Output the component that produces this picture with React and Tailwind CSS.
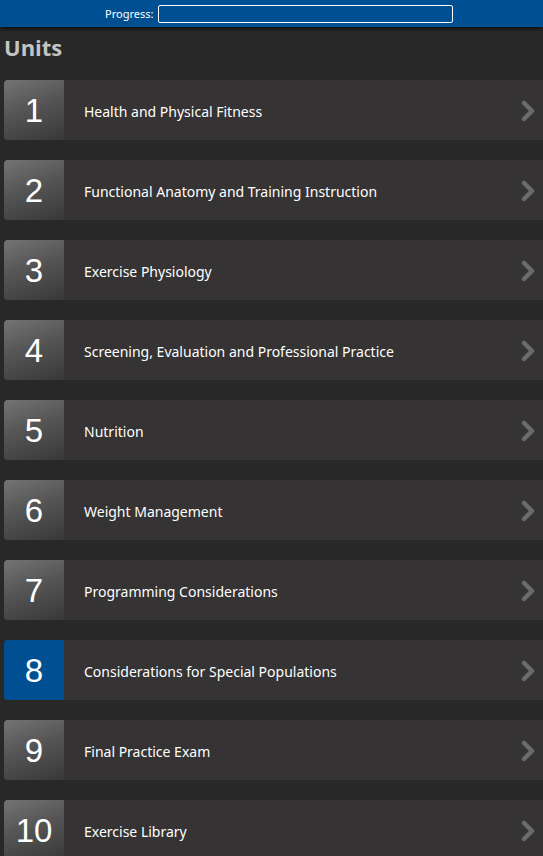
import React from "react";

const units = [
  "Health and Physical Fitness",
  "Functional Anatomy and Training Instruction",
  "Exercise Physiology",
  "Screening, Evaluation and Professional Practice",
  "Nutrition",
  "Weight Management",
  "Programming Considerations",
  "Considerations for Special Populations",
  "Final Practice Exam",
  "Exercise Library",
];

function Chevron() {
  return (
    <svg width="16" height="22" viewBox="0 0 16 22" fill="none">
      <path d="M4 3 L12 11 L4 19" stroke="#6b6b6b" strokeWidth="4.5" strokeLinecap="round" strokeLinejoin="round" />
    </svg>
  );
}

export default function App() {
  return (
    <div className="min-h-[856px] bg-[#282828] overflow-hidden" style={{ fontFamily: '"Noto Sans", "Open Sans", sans-serif' }}>
      <div className="h-[27px] bg-[#004f93] flex items-center shadow-[0_2px_4px_rgba(0,0,0,0.6)] relative z-10">
        <span className="ml-[105px] text-[11px] text-white leading-none">Progress:</span>
        <div className="ml-[5px] w-[295px] h-[18px] border border-white rounded-[2px]"></div>
      </div>
      <h1 className="pl-[4px] pt-[5px] h-[53px] text-[22px] font-bold text-[#c4c4c4] leading-[30px]" style={{ fontFamily: '"Open Sans", "Noto Sans", sans-serif' }}>Units</h1>
      <div className="flex flex-col gap-[20px] pl-[4px]">
        {units.map((t, i) => (
          <div key={i} className="flex h-[60px] bg-[#353333] rounded-l-[4px]">
            <div
              className={
                "w-[60px] shrink-0 rounded-l-[4px] flex items-center justify-center pt-[2px] text-white text-[33px] " +
                (i === 7
                  ? "bg-[#004f93]"
                  : "bg-[linear-gradient(160deg,#737373_0%,#555_45%,#383838_100%)]")
              }
              style={{ fontFamily: '"Liberation Sans", Arial, sans-serif' }}
            >
              {i + 1}
            </div>
            <div className="flex-1 flex items-center pl-[20px] pt-[3px] text-[14px] text-white">{t}</div>
            <div className="flex items-center pr-[7px] pt-[2px]">
              <Chevron />
            </div>
          </div>
        ))}
      </div>
    </div>
  );
}
